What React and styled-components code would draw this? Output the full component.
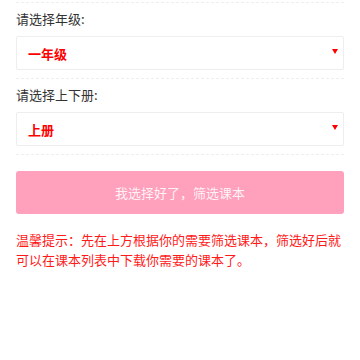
import React from "react";
import styled, { createGlobalStyle } from "styled-components";

const GlobalStyle = createGlobalStyle`
  html, body {
    margin: 0;
    padding: 0;
    background: #ffffff;
    font-family: "Noto Sans CJK SC", "Noto Sans", sans-serif;
  }
`;

const Page = styled.div`
  padding: 0 16px;
`;

const TopDivider = styled.div`
  height: 2px;
  border-bottom: 1px dashed #eeeeee;
`;

const Group = styled.div`
  padding: 6px 0 8px;
  border-bottom: 1px dashed #eeeeee;
`;

const Label = styled.div`
  font-size: 13px;
  line-height: 20px;
  color: #333333;
  margin-bottom: 7px;
`;

const Select = styled.div`
  height: 34px;
  box-sizing: border-box;
  border: 1px solid #eeeeee;
  border-radius: 2px;
  background: #ffffff;
  display: flex;
  align-items: center;
  justify-content: space-between;
  padding: 0 5px 0 11px;
`;

const Value = styled.span`
  font-size: 13px;
  font-weight: bold;
  color: #ff0000;
`;

const Arrow = styled.span`
  width: 0;
  height: 0;
  border-left: 3px solid transparent;
  border-right: 3px solid transparent;
  border-top: 5px solid #ff0000;
  margin-top: -4px;
`;

const Button = styled.div`
  margin-top: 16px;
  height: 43px;
  border-radius: 3px;
  background: #ffa0bd;
  color: rgba(255, 255, 255, 0.88);
  font-size: 13px;
  display: flex;
  align-items: center;
  justify-content: center;
`;

const Tip = styled.p`
  margin: 16px 0 0;
  font-size: 13px;
  line-height: 19.5px;
  color: #ff1a1a;
`;

const Picker = ({ label, value }) => (
  <Group>
    <Label>{label}</Label>
    <Select>
      <Value>{value}</Value>
      <Arrow />
    </Select>
  </Group>
);

const App = () => {
  return (
    <Page>
      <GlobalStyle />
      <TopDivider />
      <Picker label="请选择年级:" value="一年级" />
      <Picker label="请选择上下册:" value="上册" />
      <Button>我选择好了，筛选课本</Button>
      <Tip>
        温馨提示：先在上方根据你的需要筛选课本，筛选好后就可以在课本列表中下载你需要的课本了。
      </Tip>
    </Page>
  );
};

export default App;
